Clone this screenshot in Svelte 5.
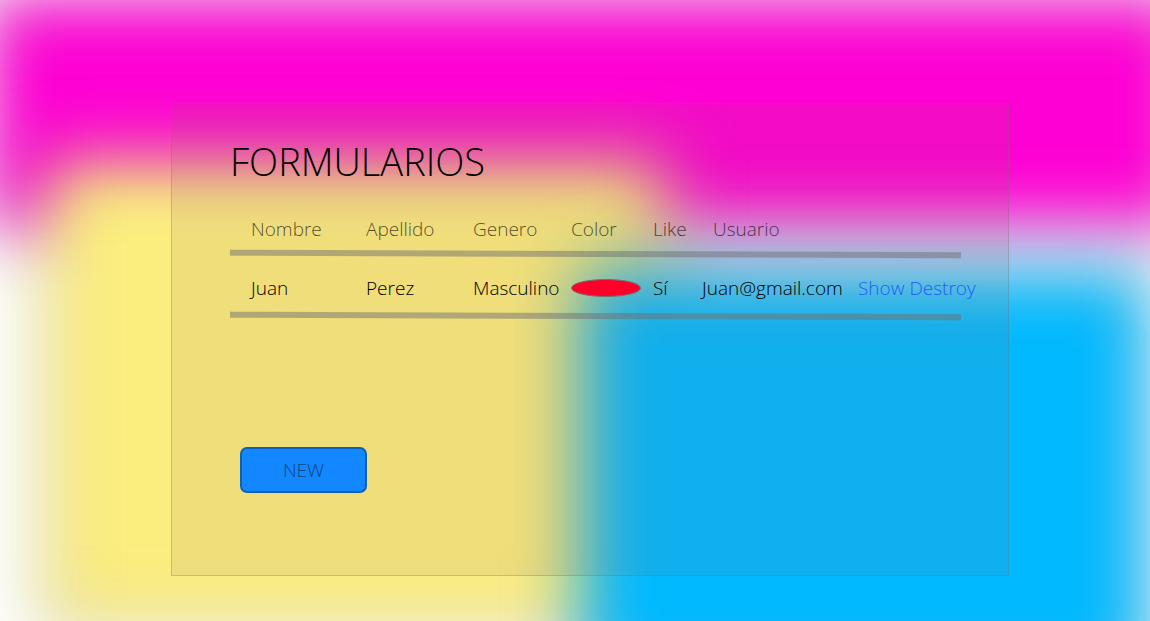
<script>
  const headings = ['Nombre', 'Apellido', 'Genero', 'Color', 'Like', 'Usuario'];
  const people = [
    { name: 'Juan', surname: 'Perez', gender: 'Masculino', color: '#ff002b', like: 'Sí', user: 'Juan@gmail.com' }
  ];
</script>

<div class="page">
  <svg class="backdrop" viewBox="0 0 1150 621" preserveAspectRatio="none" aria-hidden="true">
    <defs>
      <filter id="soft" filterUnits="userSpaceOnUse" x="-200" y="-200" width="1600" height="1100" color-interpolation-filters="sRGB">
        <feGaussianBlur stdDeviation="34" />
      </filter>
    </defs>
    <g stroke="#707070" stroke-width="6">
      <rect x="-14" y="-4" width="1206" height="231" fill="#ff00d4" filter="url(#soft)" />
      <rect x="46" y="161" width="619" height="467" fill="#fcee7e" filter="url(#soft)" />
      <rect x="583" y="271" width="565" height="415" fill="#00b9ff" filter="url(#soft)" />
    </g>
  </svg>

  <main class="card">
    <h1>FORMULARIOS</h1>
    <table>
      <thead>
        <tr>
          {#each headings as heading}
            <th scope="col">{heading}</th>
          {/each}
        </tr>
      </thead>
      <tbody>
        {#each people as person}
          <tr>
            <td>{person.name}</td>
            <td>{person.surname}</td>
            <td>{person.gender}</td>
            <td>
              <svg class="swatch" viewBox="0 0 70 18" aria-hidden="true">
                <ellipse cx="35" cy="9" rx="34.5" ry="8.5" fill={person.color} stroke="#707070" />
              </svg>
            </td>
            <td>{person.like}</td>
            <td>{person.user}</td>
            <td><a href="#show">Show</a> <a href="#destroy">Destroy</a></td>
          </tr>
        {/each}
      </tbody>
    </table>
    <button type="button">NEW</button>
  </main>
</div>

<style>
  :global(body) {
    margin: 0;
    background: #fff;
  }
  .page {
    position: relative;
    box-sizing: border-box;
    min-height: 100vh;
    padding: 103px 141px 45px 171px;
    display: flex;
    overflow: hidden;
    font-family: "Open Sans", "Noto Sans", sans-serif;
    font-size: 19px;
    font-weight: 300;
    line-height: 24px;
    color: #000;
  }
  .backdrop {
    position: absolute;
    inset: 0;
    width: 100%;
    height: 100%;
  }
  .card {
    position: relative;
    flex: 1;
    min-width: 0;
    box-sizing: border-box;
    padding: 31px 47px 82px 58px;
    display: flex;
    flex-direction: column;
    align-items: flex-start;
    background: rgba(150, 104, 90, 0.11);
    border: 1px solid rgba(112, 112, 112, 0.3);
  }
  h1 {
    margin: 0;
    font-size: 38px;
    line-height: 52px;
    font-weight: 300;
  }
  table,
  thead,
  tbody {
    display: block;
    width: 100%;
  }
  table {
    margin-top: 28px;
  }
  tr {
    display: grid;
    grid-template-columns: 115fr 107fr 98fr 82fr 49fr 156fr 103fr;
    align-items: center;
    box-sizing: border-box;
    padding-left: 21px;
  }
  tr::after {
    content: "";
    grid-column: 1 / -1;
    height: 6px;
    margin-left: -21px;
    background: rgba(112, 112, 112, 0.5);
    transform: rotate(0.2deg);
  }
  th,
  td {
    min-width: 0;
    padding: 0;
    text-align: left;
    white-space: nowrap;
    font-weight: 300;
  }
  th {
    padding: 2px 0 10px;
    color: rgba(0, 0, 0, 0.68);
  }
  th:last-child {
    padding-left: 11px;
  }
  td {
    padding: 19px 0 13px;
  }
  .swatch {
    display: block;
    width: 70px;
    height: 18px;
  }
  a {
    color: #1e5cf5;
    text-decoration: none;
  }
  button {
    margin: auto 0 0 10px;
    width: 127px;
    height: 46px;
    padding: 0;
    border: 2px solid #0b62b8;
    border-radius: 7px;
    background: #1287ff;
    color: #0c4684;
    font: inherit;
  }
</style>
